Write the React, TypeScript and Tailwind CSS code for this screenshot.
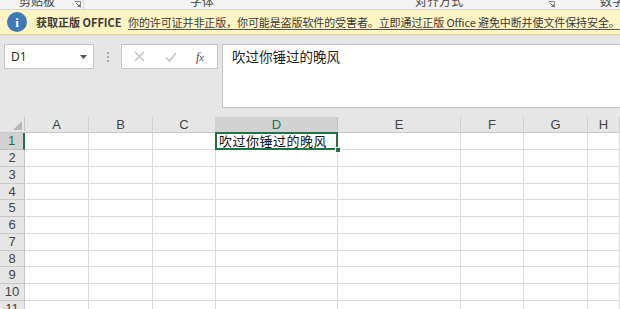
import React from "react";

const cjk = `"Noto Sans CJK SC", "Noto Sans", sans-serif`;

const columns = ["A", "B", "C", "D", "E", "F", "G", "H"];
const rowHeights = [
  "h-[17px]",
  "h-[17px]",
  "h-[17px]",
  "h-[16px]",
  "h-[17px]",
  "h-[17px]",
  "h-[17px]",
  "h-[16px]",
  "h-[17px]",
  "h-[17px]",
  "h-[17px]",
];

const Launcher = () => (
  <svg width="7" height="7" viewBox="0 0 7 7" className="mb-[1px]">
    <path d="M0.5 0.5H6.5V6.5" fill="none" stroke="#8a8a8a" strokeWidth="1" />
    <path d="M2 2L5.5 5.5M5.5 3.5V5.5H3.5" fill="none" stroke="#6a6a6a" strokeWidth="1" />
  </svg>
);

const RibbonStrip = () => (
  <div
    className="flex h-[10px] items-end overflow-hidden border-b border-[#d6d6d6] bg-[#f3f3f3] text-[12px] leading-[16px] text-[#444]"
    style={{ fontFamily: cjk }}
  >
    <div className="flex w-[84px] shrink-0 items-end border-r border-[#d6d6d6]">
      <span className="ml-[19px] w-[55px] shrink-0">剪贴板</span>
      <Launcher />
    </div>
    <div className="flex w-[472px] shrink-0 items-end">
      <span className="ml-[106px] w-[225px] shrink-0">字体</span>
      <span className="w-[133px] shrink-0">对齐方式</span>
      <Launcher />
    </div>
    <span className="ml-[44px] shrink-0">数字</span>
  </div>
);

const MessageBar = () => (
  <div
    className="flex h-[25px] items-center overflow-hidden whitespace-nowrap border-b border-[#e2d79c] bg-[#fdf4c3] text-[11px] text-[#3a3a3a]"
    style={{ fontFamily: cjk }}
  >
    <div
      className="ml-[7px] flex h-[20px] w-[20px] shrink-0 items-center justify-center rounded-full bg-[#3d78b8] text-[13px] font-bold leading-none text-white"
      style={{ fontFamily: '"Liberation Serif", serif' }}
    >
      i
    </div>
    <span className="ml-[9px] w-[83px] shrink-0 font-bold">获取正版 OFFICE</span>
    <span className="ml-[9px] shrink-0 tracking-[-0.1px] underline decoration-[#555] underline-offset-2">
      你的许可证并非正版，你可能是盗版软件的受害者。立即通过正版 Office 避免中断并使文件保持安全。
    </span>
  </div>
);

const FormulaArea = () => (
  <div className="flex h-[82px] items-start bg-[#e6e6e6] pt-[9px]">
    <div
      className="ml-[4px] flex h-[25px] w-[90px] items-center justify-between border border-[#c6c6c6] bg-white px-[6px] text-[12px] text-[#222]"
      style={{ fontFamily: '"Open Sans", sans-serif' }}
    >
      <span>D1</span>
      <svg width="7" height="4" viewBox="0 0 7 4">
        <path d="M0 0H7L3.5 4Z" fill="#555" />
      </svg>
    </div>
    <div className="flex h-[25px] w-[27px] flex-col items-center justify-center gap-[2px]">
      <span className="h-[2px] w-[2px] bg-[#aaa]" />
      <span className="h-[2px] w-[2px] bg-[#aaa]" />
      <span className="h-[2px] w-[2px] bg-[#aaa]" />
    </div>
    <div className="flex h-[25px] w-[97px] items-center border border-[#c6c6c6] bg-white">
      <svg width="11" height="11" viewBox="0 0 11 11" className="ml-[12px]">
        <path d="M1 1L10 10M10 1L1 10" stroke="#c2c2c2" strokeWidth="1.4" />
      </svg>
      <svg width="12" height="10" viewBox="0 0 12 10" className="ml-[20px]">
        <path d="M1 5.5L4.5 9L11 1" fill="none" stroke="#c2c2c2" strokeWidth="1.6" />
      </svg>
      <span className="ml-[19px] text-[12px] italic text-[#444]" style={{ fontFamily: '"Liberation Serif", serif' }}>
        f<span className="text-[10px]">x</span>
      </span>
    </div>
    <div
      className="ml-[4px] h-[64px] flex-1 border border-r-0 border-[#c6c6c6] bg-white pl-[9px] pt-[1px] text-[13.5px] text-[#222]"
      style={{ fontFamily: cjk }}
    >
      吹过你锤过的晚风
    </div>
  </div>
);

const Sheet = () => (
  <div
    className="grid grid-cols-[25px_64px_64px_63px_122px_123px_63px_64px_1fr] bg-white"
    style={{ fontFamily: '"Liberation Sans", sans-serif' }}
  >
    <div className="flex h-[16px] items-end justify-end border-b border-r border-[#c8c8c8] bg-[#e6e6e6] p-[2px]">
      <svg width="9" height="9" viewBox="0 0 9 9">
        <path d="M9 0V9H0Z" fill="#b8b8b8" />
      </svg>
    </div>
    {columns.map((c) => (
      <div
        key={c}
        className={`flex h-[16px] items-center justify-center border-b border-r text-[13px] ${
          c === "D"
            ? "border-b-[#217346] border-r-[#bdbdbd] bg-[#d2d2d2] text-[#217346]"
            : "border-b-[#c8c8c8] border-r-[#d0d0d0] bg-[#e6e6e6] text-[#444]"
        }`}
      >
        {c}
      </div>
    ))}
    {rowHeights.map((h, i) => (
      <React.Fragment key={i}>
        <div
          className={`flex ${h} items-center justify-center border-b border-r text-[13px] ${
            i === 0
              ? "border-b-[#bdbdbd] border-r-2 border-r-[#217346] bg-[#d2d2d2] text-[#217346]"
              : "border-b-[#c8c8c8] border-r-[#c8c8c8] bg-[#e6e6e6] text-[#444]"
          }`}
        >
          {i + 1}
        </div>
        {columns.map((c) =>
          i === 0 && c === "D" ? (
            <div
              key={c}
              className={`relative ${h} whitespace-nowrap border-b border-r border-[#dadada] pl-[3px] pt-[1px] text-[13px] leading-[14px] tracking-[0.5px] text-[#111]`}
              style={{ fontFamily: cjk }}
            >
              吹过你锤过的晚风
              <span className="absolute -left-[1px] -top-[1px] -right-[1px] -bottom-[1px] border-2 border-[#217346]" />
              <span className="absolute -bottom-[4px] -right-[4px] h-[6px] w-[6px] border border-white bg-[#217346]" />
            </div>
          ) : (
            <div key={c} className={`${h} border-b border-r border-[#dadada]`} />
          )
        )}
      </React.Fragment>
    ))}
  </div>
);

export default function App() {
  return (
    <div className="h-[309px] w-[620px] overflow-hidden bg-[#e6e6e6]">
      <RibbonStrip />
      <MessageBar />
      <FormulaArea />
      <Sheet />
    </div>
  );
}
